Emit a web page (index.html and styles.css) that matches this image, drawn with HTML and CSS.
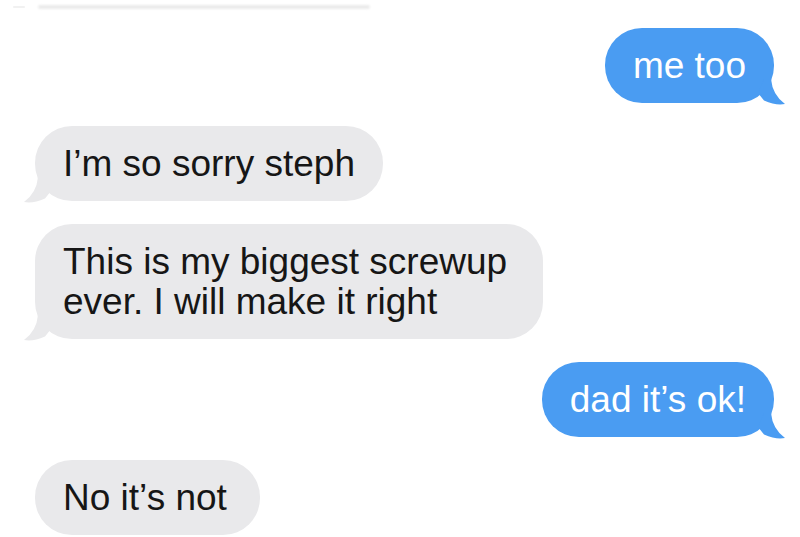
FILE: index.html
```html
<!DOCTYPE html>
<html lang="en">
<head>
<meta charset="utf-8">
<title>Messages</title>
<link rel="stylesheet" href="styles.css">
</head>
<body>
<main class="thread">
  <div class="prev-edge"><span class="prev-tail"></span><span class="prev-line"></span></div>
  <div class="msg sent">me too<svg class="tail" viewBox="0 0 34 26" width="34" height="26"><path d="M10 0 L17 0 Q18.5 16 31 25 Q22 26.8 10 21.5 L4 14 Z"/></svg></div>
  <div class="msg recv">I’m so sorry steph<svg class="tail" viewBox="0 0 34 26" width="34" height="26"><path d="M10 0 L17 0 Q18.5 16 31 25 Q22 26.8 10 21.5 L4 14 Z"/></svg></div>
  <div class="msg recv wide">This is my biggest screwup<br>ever. I will make it right<svg class="tail" viewBox="0 0 34 26" width="34" height="26"><path d="M10 0 L17 0 Q18.5 16 31 25 Q22 26.8 10 21.5 L4 14 Z"/></svg></div>
  <div class="msg sent">dad it’s ok!<svg class="tail" viewBox="0 0 34 26" width="34" height="26"><path d="M10 0 L17 0 Q18.5 16 31 25 Q22 26.8 10 21.5 L4 14 Z"/></svg></div>
  <div class="msg recv last">No it’s not</div>
</main>
</body>
</html>
```

FILE: styles.css
```css
html, body {
  margin: 0;
  padding: 0;
  background: #ffffff;
}

body {
  width: 800px;
  height: 537px;
  overflow: hidden;
  font-family: "Liberation Sans", Arial, "Helvetica Neue", sans-serif;
}

.thread {
  display: flex;
  flex-direction: column;
  gap: 23px;
  padding-top: 5px;
}

.prev-edge {
  display: flex;
  align-items: center;
  height: 4px;
  margin-bottom: -4px;
  padding-left: 13px;
}

.prev-tail {
  width: 12px;
  height: 2px;
  border-radius: 1px;
  background: #f1f1f1;
}

.prev-line {
  margin-left: 13px;
  width: 332px;
  height: 4px;
  border-radius: 2px;
  background: #ebebeb;
  filter: blur(0.8px);
}

.msg {
  position: relative;
  box-sizing: border-box;
  padding: 17.5px 28px;
  border-radius: 37px;
  font-size: 37px;
  line-height: 40px;
  white-space: nowrap;
}

.recv {
  align-self: flex-start;
  margin-left: 35px;
  background: #e9e9eb;
  color: #161616;
}

.recv.wide {
  padding-right: 36px;
}

.recv.last {
  padding-right: 33px;
}

.sent {
  align-self: flex-end;
  margin-right: 26px;
  background: #4a9cf2;
  color: #ffffff;
}

.tail {
  position: absolute;
  bottom: -2px;
  display: block;
}

.sent .tail {
  right: -14px;
  fill: #4a9cf2;
}

.recv .tail {
  left: -14px;
  fill: #e9e9eb;
  transform: scaleX(-1);
}
```
